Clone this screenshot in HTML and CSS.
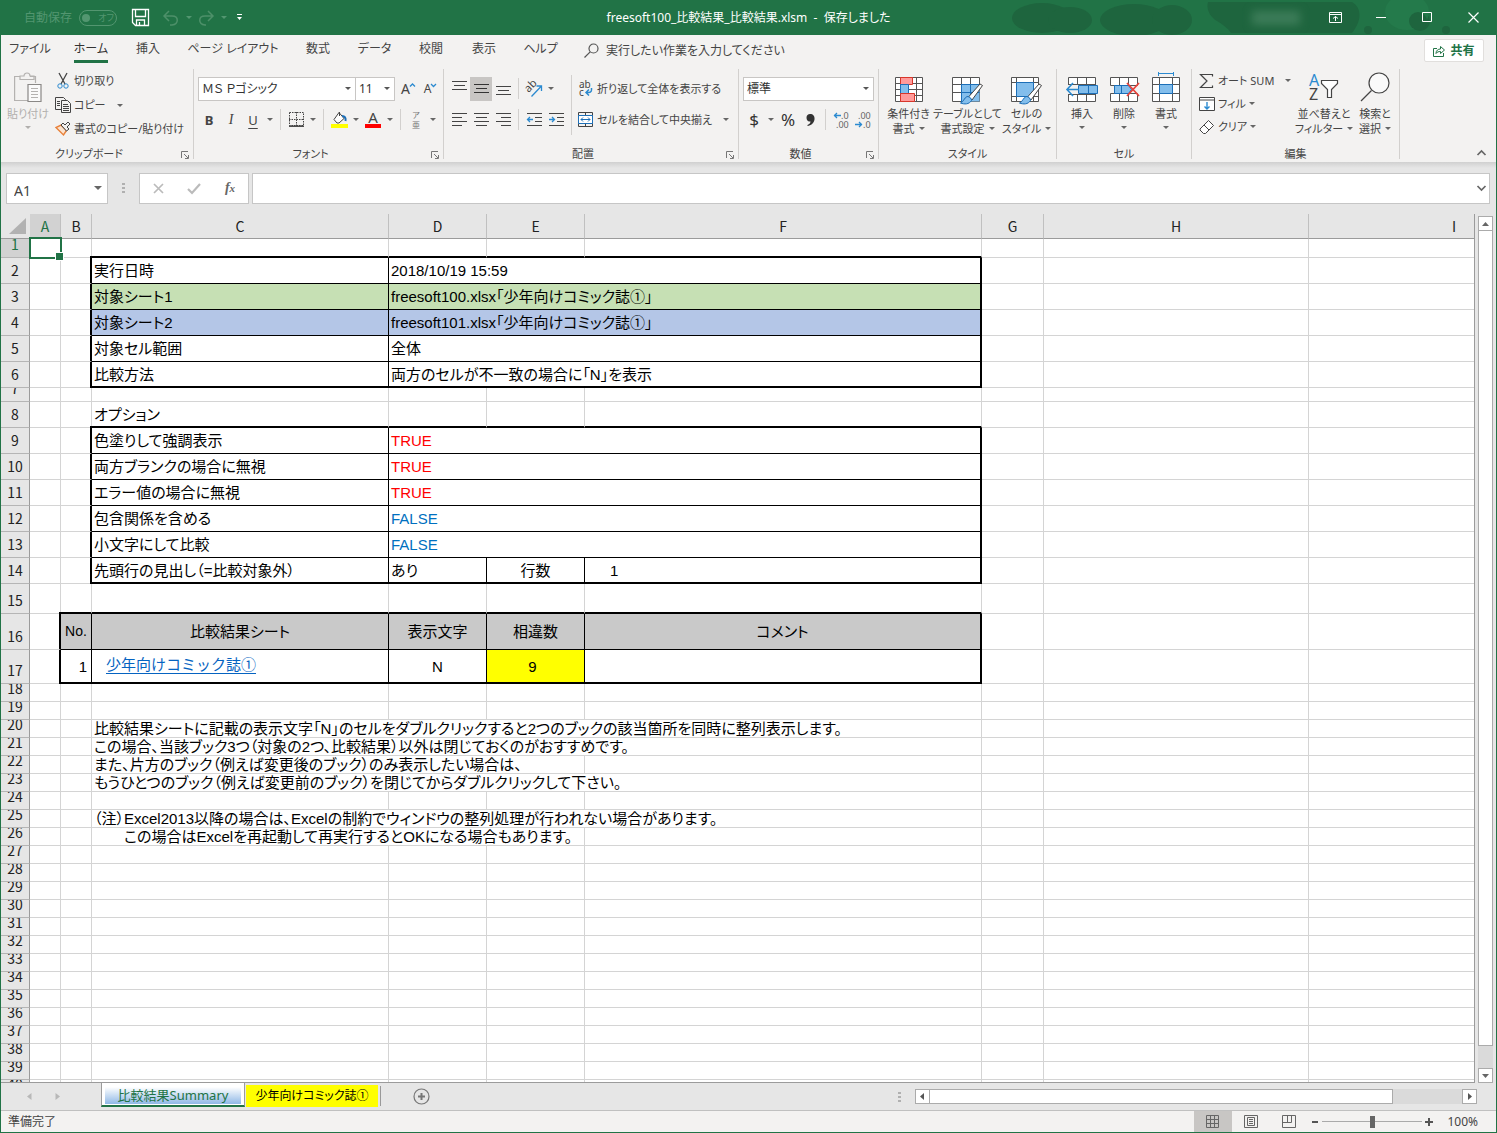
FILE: index.html
```html
<!DOCTYPE html>
<html lang="ja">
<head>
<meta charset="utf-8">
<title>freesoft100_比較結果_比較結果.xlsm</title>
<link rel="stylesheet" href="styles.css">
</head>
<body>
<div class="app">
  <header class="titlebar">
    <svg class="titlebar-art" width="510" height="35" viewBox="0 0 510 35" aria-hidden="true">
      <g fill="#1e653e">
        <ellipse cx="56" cy="18" rx="30" ry="15"/><ellipse cx="84" cy="20" rx="22" ry="13"/>
        <ellipse cx="148" cy="20" rx="34" ry="16"/><ellipse cx="186" cy="20" rx="20" ry="15"/>
        <path d="M222 2h144c10 6 10 18 0 31H245c-3-5-8-8-14-12-7-4-11-12-9-19z"/>
        <circle cx="382" cy="30" r="4"/><circle cx="434" cy="21" r="10"/><circle cx="460" cy="30" r="4"/>
      </g>
      <ellipse cx="421" cy="12" rx="22" ry="18" fill="#247a4b"/>
      <circle cx="432" cy="21" r="9" fill="#1e653e"/>
    </svg>
    <div class="quick">
      <span class="autosave">自動保存</span>
      <button class="toggle" aria-label="自動保存"><i></i><span>オフ</span></button>
      <button class="q-save" aria-label="保存"><svg width="17" height="17" fill="none" stroke="#fff"><path d="M.5.5h16v16h-13l-3-3zM3.500 1v6.500h10V1M4.500 16v-5h8v5M7.500 13v3" stroke-width="1.300"/></svg></button>
      <button class="q-btn" aria-label="元に戻す"><svg width="16" height="16" fill="none" stroke="#4d9069" stroke-width="1.500"><path d="M6 1 1 6l5 5M1 6h8c7 0 7 8 0 9H7"/></svg><i class="caret"></i></button>
      <button class="q-btn" aria-label="やり直し"><svg width="16" height="16" fill="none" stroke="#4d9069" stroke-width="1.500"><path d="m10 1 5 5-5 5M15 6H7c-7 0-7 8 0 9h1"/></svg><i class="caret"></i></button>
      <button class="q-more" aria-label="カスタマイズ"><svg width="7" height="7"><path d="M1 0h5v1H1zM1 3h5L3.500 6z" fill="#fff"/></svg></button>
    </div>
    <h1 class="doc-title">freesoft100_比較結果_比較結果.xlsm&nbsp; -&nbsp; 保存しました</h1>
    <div class="window-btns">
      <span class="account"></span>
      <button aria-label="リボンの表示オプション"><svg width="13" height="11" fill="none" stroke="#fff"><path d="M.5.5h12v10H.5zM1 2.500h11M6.500 9V4.500M4 6.500l2.500-2 2.500 2"/></svg></button>
      <button aria-label="最小化"><svg width="11" height="11" stroke="#fff"><path d="M0 5.500h10"/></svg></button>
      <button aria-label="最大化"><svg width="11" height="11" fill="none" stroke="#fff"><path d="M.5.5h9v9h-9z"/></svg></button>
      <button aria-label="閉じる"><svg width="11" height="11" stroke="#fff" stroke-width="1.200"><path d="m.5.5 10 10M10.500.5l-10 10"/></svg></button>
    </div>
  </header>

  <nav class="tabs">
    <button class="tab t-file">ファイル</button>
    <button class="tab t-home on">ホーム</button>
    <button class="tab t-two">挿入</button>
    <button class="tab t-page">ページ レイアウト</button>
    <button class="tab t-two">数式</button>
    <button class="tab t-data">データ</button>
    <button class="tab t-two">校閲</button>
    <button class="tab t-two">表示</button>
    <button class="tab t-data">ヘルプ</button>
    <button class="tell"><svg width="15" height="15" fill="none" stroke="#555" stroke-width="1.200"><circle cx="9.500" cy="5.500" r="4.500"/><path d="M6.200 8.800.5 14.500"/></svg>実行したい作業を入力してください</button>
    <button class="share"><svg width="12" height="12" fill="none" stroke="#217346"><path d="M4 3.500H.5v8h10V8M3 8.500c0-3 2-4.500 4.500-4.500V1.500l4 3.500-4 3.500V6.500C5.500 6.500 4 7 3 8.500z"/></svg>共有</button>
  </nav>

  <section class="ribbon">
    <div class="group g-clip">
      <div class="tools">
        <button class="big paste"><svg width="28" height="31" fill="none" stroke="#b4b2b0" stroke-width="1.200"><path d="M6 4.500H.600v24H14M16 4.500h5.500V11M6 7.500V4h4c0-4 6-4 6 0h4v3.500z" fill="#f3f2f1"/><path d="M14 12.500h13v17H14z" fill="#fafafa" stroke="#8a8886"/><path d="M17 16.500h7M17 19.500h7M17 22.500h7M17 25.500h7"/></svg><span>貼り付け</span><i class="caret"></i></button>
        <div class="stack">
          <button class="small"><svg width="16" height="16" fill="none"><path d="m4 0 6 11M12 0 6 11" stroke="#444" stroke-width="1.300"/><circle cx="5" cy="13" r="2.200" stroke="#2b8ad0"/><circle cx="11" cy="13" r="2.200" stroke="#2b8ad0"/></svg>切り取り</button>
          <button class="small"><svg width="16" height="16" fill="#f3f2f1" stroke="#444"><path d="M.5.5h8l2 2v10H.5z"/><path d="M2 4.500h3M2 6.500h3M2 8.500h3"/><path d="M6.500 3.500h6l3 3v9h-9z"/><path d="M8 7.500h5M8 9.500h6M8 11.500h6M8 13.500h6"/></svg>コピー<i class="caret gap"></i></button>
          <button class="small"><svg width="16" height="16"><path d="M1 6.500 8.500 14l3-4.500L6 4z" fill="#fbe3cf" stroke="#e8813a" stroke-width="1.400"/><path d="m6 4 2-2 2 2 3-3 2 2-3 3 2 2-2.500 2z" fill="#f3f2f1" stroke="#444"/></svg>書式のコピー/貼り付け</button>
        </div>
      </div>
      <div class="caption">クリップボード</div><button class="launch" aria-label="クリップボードの詳細"><svg width="8" height="8" fill="none" stroke="#777"><path d="M.5 7V.5H7M3 3l4 4M7.500 4v3.500H4"/></svg></button>
    </div>

    <div class="group g-font">
      <div class="rows">
        <div class="line">
          <span class="combo c-font"><select aria-label="フォント"><option>ＭＳ Ｐゴシック</option></select></span>
          <span class="combo c-size"><select aria-label="フォント サイズ"><option>11</option></select></span>
          <button class="ico" aria-label="拡大"><span class="letter">A</span><svg width="5" height="12" fill="none" stroke="#2b8ad0" stroke-width="1.300"><path d="m0 3.500 2.500-2.500L5 3.500"/></svg></button>
          <button class="ico" aria-label="縮小"><span class="letter sm">A</span><svg width="5" height="12" fill="none" stroke="#2b8ad0" stroke-width="1.300"><path d="m0 1 2.500 2.500L5 1"/></svg></button>
        </div>
        <div class="line">
          <button class="ico bold">B</button><button class="ico ital">I</button><button class="ico under">U</button><button class="drop" aria-label="下線"><i class="caret"></i></button>
          <i class="sep"></i>
          <button class="ico" aria-label="罫線"><svg width="15" height="15" fill="none" stroke="#444"><path d="M.5.5h14v13H.5zM7.500 0v14M0 7.500h15" stroke-dasharray="1.500 1"/><path d="M0 14.200h15" stroke-width="1.500"/></svg></button><button class="drop" aria-label="罫線の種類"><i class="caret"></i></button>
          <i class="sep"></i>
          <button class="ico" aria-label="塗りつぶし"><svg width="17" height="17"><path d="m8 1.500 5 6-5 4.500H6L3 8.500z" fill="#fff" stroke="#444"/><path d="M8.500 1v4" stroke="#444"/><path d="M11 5c3 0 4 2 3.500 5" fill="none" stroke="#1c6fb8" stroke-width="2"/><path d="M0 13h17v4H0z" fill="#ff0"/></svg></button><button class="drop" aria-label="塗りつぶしの色"><i class="caret"></i></button>
          <button class="ico fcolor" aria-label="フォントの色"><span>A</span></button><button class="drop" aria-label="色の選択"><i class="caret"></i></button>
          <i class="sep"></i>
          <button class="ico ruby"><span>ア</span><span>亜</span></button><button class="drop" aria-label="ふりがな"><i class="caret"></i></button>
        </div>
      </div>
      <div class="caption">フォント</div><button class="launch" aria-label="フォントの詳細"><svg width="8" height="8" fill="none" stroke="#777"><path d="M.5 7V.5H7M3 3l4 4M7.500 4v3.500H4"/></svg></button>
    </div>

    <div class="group g-align">
      <div class="split">
        <div class="rows">
          <div class="line">
            <button class="ico" aria-label="上揃え"><svg width="15" height="15" stroke="#444"><path d="M0 .5h15M2 4.500h11M0 8.500h15"/></svg></button>
            <button class="ico on" aria-label="上下中央揃え"><svg width="15" height="15" stroke="#333"><path d="M0 3.500h15M2 7.500h11M0 11.500h15"/></svg></button>
            <button class="ico" aria-label="下揃え"><svg width="15" height="15" stroke="#444"><path d="M0 5.500h15M2 9.500h11M0 13.500h15"/></svg></button>
            <i class="sep"></i>
            <button class="ico" aria-label="方向"><svg width="17" height="17"><g transform="rotate(-45 6 8)"><text x="0" y="9" font-size="11" fill="#444">ab</text></g><path d="M5.500 16.500 15 6.500M10.500 6H15.500V11" fill="none" stroke="#2b8ad0" stroke-width="1.300"/></svg></button><button class="drop" aria-label="方向の選択"><i class="caret"></i></button>
          </div>
          <div class="line">
            <button class="ico" aria-label="左揃え"><svg width="15" height="15" stroke="#444"><path d="M0 1.500h15M0 5.500h10M0 9.500h15M0 13.500h10"/></svg></button>
            <button class="ico" aria-label="中央揃え"><svg width="15" height="15" stroke="#444"><path d="M0 1.500h15M2 5.500h11M0 9.500h15M2 13.500h11"/></svg></button>
            <button class="ico" aria-label="右揃え"><svg width="15" height="15" stroke="#444"><path d="M0 1.500h15M5 5.500h10M0 9.500h15M5 13.500h10"/></svg></button>
            <i class="sep"></i>
            <button class="ico" aria-label="インデントを減らす"><svg width="15" height="15" fill="none" stroke="#444"><path d="M0 1.500h15M8 5.500h7M8 9.500h7M0 13.500h15"/><path d="M.5 7.500H6M3 5 .5 7.500 3 10" stroke="#2b8ad0" stroke-width="1.300"/></svg></button>
            <button class="ico" aria-label="インデントを増やす"><svg width="15" height="15" fill="none" stroke="#444"><path d="M0 1.500h15M8 5.500h7M8 9.500h7M0 13.500h15"/><path d="M0 7.500h5.500M3 5l2.500 2.500L3 10" stroke="#2b8ad0" stroke-width="1.300"/></svg></button>
          </div>
        </div>
        <i class="sep tall"></i>
        <div class="rows">
          <div class="line"><button class="small"><svg class="wide" width="15" height="17"><text x="1" y="8" font-size="10" fill="#444">ab</text><text x="1" y="16" font-size="10" fill="#444">c</text><path d="M13.500 8v2c0 2.500-2 2.500-5.500 2.500M11 9.500 8 12.500l3 3" fill="none" stroke="#2b8ad0" stroke-width="1.500"/></svg>折り返して全体を表示する</button></div>
          <div class="line"><button class="small merge"><svg class="wide" width="15" height="15" fill="none" stroke="#444"><path d="M.5.5h14v14H.5zM7.500 0v3.500M7.500 11.500V15"/><path d="M.5 3.500h14v8H.5z" fill="#fff" stroke="#1c6fb8"/><path d="M3 7.500h9M5 5.500l-2 2 2 2M10 5.500l2 2-2 2" stroke="#1c6fb8"/></svg>セルを結合して中央揃え<i class="caret"></i></button></div>
        </div>
      </div>
      <div class="caption">配置</div><button class="launch" aria-label="配置の詳細"><svg width="8" height="8" fill="none" stroke="#777"><path d="M.5 7V.5H7M3 3l4 4M7.500 4v3.500H4"/></svg></button>
    </div>

    <div class="group g-num">
      <div class="rows">
        <div class="line"><span class="combo c-num"><select aria-label="数値の書式"><option>標準</option></select></span></div>
        <div class="line">
          <button class="ico sym">$</button><button class="drop" aria-label="通貨"><i class="caret"></i></button>
          <button class="ico sym">%</button>
          <button class="ico" aria-label="桁区切り"><svg width="9" height="14"><path d="M4 1c3 0 5 2 4.500 5.500C8 10 5 12.500 1.500 13V12c2-1 3-2 3-3.500C1.500 9 .5 6.500.5 4.500.5 2.500 2 1 4 1z" fill="#333"/></svg></button>
          <i class="sep"></i>
          <button class="ico" aria-label="小数点以下を増やす"><svg width="16" height="18" fill="#666"><path d="M1 4.500h7M4 2 1.500 4.500 4 7" fill="none" stroke="#2b8ad0" stroke-width="1.300"/><text x="8" y="8" font-size="9">.0</text><text x="3" y="17" font-size="9">.00</text></svg></button>
          <button class="ico" aria-label="小数点以下を減らす"><svg width="16" height="18" fill="#666"><text x="3" y="8" font-size="9">.00</text><text x="8" y="17" font-size="9">.0</text><path d="M0 13.500h7M4 11l2.500 2.500L4 16" fill="none" stroke="#2b8ad0" stroke-width="1.300"/></svg></button>
        </div>
      </div>
      <div class="caption">数値</div><button class="launch" aria-label="数値の詳細"><svg width="8" height="8" fill="none" stroke="#777"><path d="M.5 7V.5H7M3 3l4 4M7.500 4v3.500H4"/></svg></button>
    </div>

    <div class="group g-style">
      <div class="tools even">
        <button class="big"><svg width="30" height="31"><path d="M1.500 5.500h27v24h-27zM1.500 11.500h27M1.500 17.500h27M1.500 23.500h27M6.500 5v25M22.500 5v25" fill="#fff" stroke="#555"/><path d="M6.500 5.500h12v7h-12z" fill="#ff9a9a" stroke="#d8362a"/><path d="M6.500 12.500h8v9h-8z" fill="#83beec" stroke="#1c6fb8"/><path d="M6.500 21.500h14v8h-14z" fill="#ff9a9a" stroke="#d8362a"/></svg><span>条件付き<br>書式<i class="caret"></i></span></button>
        <button class="big"><svg width="32" height="33"><path d="M.5 5.500h27v24H.5zM.5 12.500h27M.5 20.500h27M9.500 5v25M18.500 5v25" fill="#fff" stroke="#555"/><path d="M9.500 12.500h18v17h-18z" fill="#83beec"/><path d="M9.500 12.500h18M9.500 20.500h18M9.500 12v18M18.500 12v18" stroke="#1c6fb8"/><path d="m28 12 2.500 1.500L20 28l-3.500-3z" fill="#fff" stroke="#444"/><path d="M15 24.500c3 0 4.500 2 4.500 4-2.500 4-7 4-11 2.500 3-1 3.500-5 6.500-6.500z" fill="#83beec" stroke="#1c6fb8"/></svg><span>テーブルとして<br>書式設定<i class="caret"></i></span></button>
        <button class="big"><svg width="32" height="33"><path d="M.5 5.500h27v24H.5zM.5 10.500h27M.5 24.500h27M5.500 5v25M22.500 5v25" fill="#fff" stroke="#555"/><path d="M5.500 10.500h17v14h-17z" fill="#83beec" stroke="#1c6fb8"/><path d="m28 12 2.500 1.500L20 28l-3.500-3z" fill="#fff" stroke="#444"/><path d="M15 24.500c3 0 4.500 2 4.500 4-2.500 4-7 4-11 2.500 3-1 3.500-5 6.500-6.500z" fill="#83beec" stroke="#1c6fb8"/></svg><span>セルの<br>スタイル<i class="caret"></i></span></button>
      </div>
      <div class="caption">スタイル</div>
    </div>

    <div class="group g-cells">
      <div class="tools even">
        <button class="big"><svg width="32" height="31"><path d="M2.500 5.500h27v24h-27zM2.500 22.500h27M11.500 5v25M20.500 5v25M2.500 12.500h27" fill="#fff" stroke="#555"/><path d="M12.500 13.500h19v8h-19zM22.500 13v9" fill="#83beec" stroke="#1c6fb8"/><path d="M0 13h12v9H0z" fill="#f3f2f1"/><path d="M1 17.500h12M7 11l-6 6.500L7 24" fill="none" stroke="#2b8ad0" stroke-width="1.600"/></svg><span>挿入</span><i class="caret"></i></button>
        <button class="big"><svg width="32" height="31"><path d="M2.500 5.500h27v8h-27zM2.500 21.500h27v8h-27zM11.500 5v8M20.500 5v8M11.500 22v8M20.500 22v8" fill="#fff" stroke="#555"/><path d="M6.500 13.500h14l3 4-3 4h-14zM13.500 13v9" fill="#83beec" stroke="#1c6fb8"/><path d="m19 11 12 13M31 11 19 24" stroke="#e8423a" stroke-width="1.800"/></svg><span>削除</span><i class="caret"></i></button>
        <button class="big"><svg width="30" height="31"><path d="M1.500 5.500h27v24h-27zM1.500 12.500h27M1.500 21.500h27M8.500 5v25M21.500 5v25" fill="#fff" stroke="#555"/><path d="M8.500 12.500h13v9h-13z" fill="#83beec" stroke="#1c6fb8"/><path d="M7.500 1.500h15M7.500 0v4M22.500 0v4" stroke="#2b8ad0"/></svg><span>書式</span><i class="caret"></i></button>
      </div>
      <div class="caption">セル</div>
    </div>

    <div class="group g-edit">
      <div class="tools">
        <div class="stack">
          <button class="small"><svg width="16" height="16" fill="none" stroke="#444" stroke-width="1.200"><path d="M13.500 3.500v-2h-12L8 8l-6.500 6.500h12v-2"/></svg>オート SUM<i class="caret gap"></i></button>
          <button class="small"><svg width="16" height="16" fill="none" stroke="#444"><path d="M.5 1.500h15v13H.5z" fill="#fff"/><path d="M0 4h15"/><path d="M8 6v7M5.500 10.500 8 13l2.500-2.500" stroke="#2b8ad0" stroke-width="1.400"/></svg>フィル<i class="caret"></i></button>
          <button class="small"><svg width="16" height="16" fill="#fff" stroke="#444"><path d="m9.500 1.500 5 5-8 8h-2l-3.500-3.500v-1zM5 6l5 5"/></svg>クリア<i class="caret"></i></button>
        </div>
        <button class="big sort"><svg width="30" height="31"><text x="0" y="14" font-size="16" fill="#2b8ad0">A</text><text x="0" y="28" font-size="16" fill="#444">Z</text><path d="M12.500 8.500h16v3l-6 6v8h-4v-8l-6-6z" fill="#fff" stroke="#444" stroke-width="1.200"/></svg><span>並べ替えと<br>フィルター<i class="caret"></i></span></button>
        <button class="big find"><svg width="30" height="31" fill="#fafafa" stroke="#444" stroke-width="1.200"><circle cx="19" cy="11" r="10"/><path d="M11.500 18.500 1 29"/></svg><span>検索と<br>選択<i class="caret"></i></span></button>
      </div>
      <div class="caption">編集</div>
    </div>
    <button class="collapse" aria-label="リボンを折りたたむ"><svg width="9" height="6" fill="none" stroke="#666" stroke-width="1.700"><path d="m.5 5 4-4 4 4"/></svg></button>
  </section>

  <section class="formula">
    <span class="namebox"><input aria-label="名前ボックス" value="A1"></span>
    <i class="dots"></i>
    <div class="fx">
      <button aria-label="キャンセル"><svg width="11" height="11" stroke="#bbb" stroke-width="1.700"><path d="m1 1 9 9M10 1l-9 9"/></svg></button>
      <button aria-label="入力"><svg width="14" height="11" fill="none" stroke="#bbb" stroke-width="2.200"><path d="m1 6 4 4 8-9"/></svg></button>
      <button class="fx-btn" aria-label="関数の挿入">f<sub>x</sub></button>
    </div>
    <div class="entry"><input aria-label="数式バー"><svg width="9" height="6" fill="none" stroke="#666" stroke-width="1.700"><path d="m.5 1 4 4 4-4"/></svg></div>
  </section>

  <main class="work">
    <div class="sheet">
      <table class="grid">
        <colgroup><col class="w-n"><col class="w-a"><col class="w-b"><col class="w-c"><col class="w-d"><col class="w-d"><col class="w-f"><col class="w-g"><col class="w-h"><col class="w-i"></colgroup>
        <thead><tr><th class="corner"><svg width="18" height="17"><path d="M17 0v16H0z" fill="#b2b2b2"/></svg></th><th scope="col" class="sel">A</th><th scope="col">B</th><th scope="col">C</th><th scope="col">D</th><th scope="col">E</th><th scope="col">F</th><th scope="col">G</th><th scope="col">H</th><th scope="col">I</th></tr></thead>
        <tbody>
        <tr class="r1"><th scope="row" class="sel"><span>1</span></th><td class="active"></td><td class="joint"></td><td class="kb"></td><td class="kb"></td><td class="kb"></td><td class="kb"></td><td></td><td></td><td></td></tr>
        <tr class="r26"><th scope="row"><span>2</span></th><td></td><td class="kr"></td><td class="br bb">実行日時</td><td class="kr bb" colspan="3">2018/10/19 15:59</td><td></td><td></td><td></td></tr>
        <tr class="r26"><th scope="row"><span>3</span></th><td></td><td class="kr"></td><td class="br bb green">対象シート1</td><td class="kr bb green" colspan="3">freesoft100.xlsx「少年向けコミック誌①」</td><td></td><td></td><td></td></tr>
        <tr class="r26"><th scope="row"><span>4</span></th><td></td><td class="kr"></td><td class="br bb blue">対象シート2</td><td class="kr bb blue" colspan="3">freesoft101.xlsx「少年向けコミック誌①」</td><td></td><td></td><td></td></tr>
        <tr class="r26"><th scope="row"><span>5</span></th><td></td><td class="kr"></td><td class="br bb">対象セル範囲</td><td class="kr bb" colspan="3">全体</td><td></td><td></td><td></td></tr>
        <tr class="r26"><th scope="row"><span>6</span></th><td></td><td class="kr joint"></td><td class="br kb">比較方法</td><td class="kr kb" colspan="3">両方のセルが不一致の場合に「N」を表示</td><td></td><td></td><td></td></tr>
        <tr class="r14"><th scope="row"><span>7</span></th><td></td><td></td><td></td><td></td><td></td><td></td><td></td><td></td><td></td></tr>
        <tr class="r26"><th scope="row"><span>8</span></th><td></td><td class="joint"></td><td class="kb">オプション</td><td class="kb"></td><td class="kb"></td><td class="kb"></td><td></td><td></td><td></td></tr>
        <tr class="r26"><th scope="row"><span>9</span></th><td></td><td class="kr"></td><td class="br bb">色塗りして強調表示</td><td class="kr bb yes" colspan="3">TRUE</td><td></td><td></td><td></td></tr>
        <tr class="r26"><th scope="row"><span>10</span></th><td></td><td class="kr"></td><td class="br bb">両方ブランクの場合に無視</td><td class="kr bb yes" colspan="3">TRUE</td><td></td><td></td><td></td></tr>
        <tr class="r26"><th scope="row"><span>11</span></th><td></td><td class="kr"></td><td class="br bb">エラー値の場合に無視</td><td class="kr bb yes" colspan="3">TRUE</td><td></td><td></td><td></td></tr>
        <tr class="r26"><th scope="row"><span>12</span></th><td></td><td class="kr"></td><td class="br bb">包含関係を含める</td><td class="kr bb no" colspan="3">FALSE</td><td></td><td></td><td></td></tr>
        <tr class="r26"><th scope="row"><span>13</span></th><td></td><td class="kr"></td><td class="br bb">小文字にして比較</td><td class="kr bb no" colspan="3">FALSE</td><td></td><td></td><td></td></tr>
        <tr class="r26"><th scope="row"><span>14</span></th><td></td><td class="kr joint"></td><td class="br kb">先頭行の見出し（=比較対象外）</td><td class="br kb">あり</td><td class="br kb mid">行数</td><td class="kr kb indent">1</td><td></td><td></td><td></td></tr>
        <tr class="r30"><th scope="row"><span>15</span></th><td class="joint"></td><td class="kb"></td><td class="kb"></td><td class="kb"></td><td class="kb"></td><td class="kb"></td><td></td><td></td><td></td></tr>
        <tr class="r36"><th scope="row"><span>16</span></th><td class="kr"></td><td class="br bb mid gray tight">No.</td><td class="br bb mid gray">比較結果シート</td><td class="br bb mid gray">表示文字</td><td class="br bb mid gray">相違数</td><td class="kr bb mid gray">コメント</td><td></td><td></td><td></td></tr>
        <tr class="r34"><th scope="row"><span>17</span></th><td class="kr joint"></td><td class="br kb end">1</td><td class="br kb"><a class="link" href="#sheet2">少年向けコミック誌①</a></td><td class="br kb mid">N</td><td class="br kb mid count">9</td><td class="kr kb"></td><td></td><td></td><td></td></tr>
        <tr class="r18"><th scope="row"><span>18</span></th><td></td><td></td><td></td><td></td><td></td><td></td><td></td><td></td><td></td></tr>
        <tr class="r18"><th scope="row"><span>19</span></th><td></td><td></td><td></td><td></td><td></td><td></td><td></td><td></td><td></td></tr>
        <tr class="r18"><th scope="row"><span>20</span></th><td></td><td></td><td colspan="4">比較結果シートに記載の表示文字「N」のセルをダブルクリックすると2つのブックの該当箇所を同時に整列表示します。</td><td></td><td></td><td></td></tr>
        <tr class="r18"><th scope="row"><span>21</span></th><td></td><td></td><td colspan="4">この場合、当該ブック3つ（対象の2つ、比較結果）以外は閉じておくのがおすすめです。</td><td></td><td></td><td></td></tr>
        <tr class="r18"><th scope="row"><span>22</span></th><td></td><td></td><td colspan="3">また、片方のブック（例えば変更後のブック）のみ表示したい場合は、</td><td></td><td></td><td></td><td></td></tr>
        <tr class="r18"><th scope="row"><span>23</span></th><td></td><td></td><td colspan="4">もうひとつのブック（例えば変更前のブック）を閉じてからダブルクリックして下さい。</td><td></td><td></td><td></td></tr>
        <tr class="r18"><th scope="row"><span>24</span></th><td></td><td></td><td></td><td></td><td></td><td></td><td></td><td></td><td></td></tr>
        <tr class="r18"><th scope="row"><span>25</span></th><td></td><td></td><td colspan="4">（注）Excel2013以降の場合は、Excelの制約でウィンドウの整列処理が行われない場合があります。</td><td></td><td></td><td></td></tr>
        <tr class="r18"><th scope="row"><span>26</span></th><td></td><td></td><td colspan="3">　　この場合はExcelを再起動して再実行するとOKになる場合もあります。</td><td></td><td></td><td></td><td></td></tr>
        <tr class="r18"><th scope="row"><span>27</span></th><td></td><td></td><td></td><td></td><td></td><td></td><td></td><td></td><td></td></tr>
        <tr class="r18"><th scope="row"><span>28</span></th><td></td><td></td><td></td><td></td><td></td><td></td><td></td><td></td><td></td></tr>
        <tr class="r18"><th scope="row"><span>29</span></th><td></td><td></td><td></td><td></td><td></td><td></td><td></td><td></td><td></td></tr>
        <tr class="r18"><th scope="row"><span>30</span></th><td></td><td></td><td></td><td></td><td></td><td></td><td></td><td></td><td></td></tr>
        <tr class="r18"><th scope="row"><span>31</span></th><td></td><td></td><td></td><td></td><td></td><td></td><td></td><td></td><td></td></tr>
        <tr class="r18"><th scope="row"><span>32</span></th><td></td><td></td><td></td><td></td><td></td><td></td><td></td><td></td><td></td></tr>
        <tr class="r18"><th scope="row"><span>33</span></th><td></td><td></td><td></td><td></td><td></td><td></td><td></td><td></td><td></td></tr>
        <tr class="r18"><th scope="row"><span>34</span></th><td></td><td></td><td></td><td></td><td></td><td></td><td></td><td></td><td></td></tr>
        <tr class="r18"><th scope="row"><span>35</span></th><td></td><td></td><td></td><td></td><td></td><td></td><td></td><td></td><td></td></tr>
        <tr class="r18"><th scope="row"><span>36</span></th><td></td><td></td><td></td><td></td><td></td><td></td><td></td><td></td><td></td></tr>
        <tr class="r18"><th scope="row"><span>37</span></th><td></td><td></td><td></td><td></td><td></td><td></td><td></td><td></td><td></td></tr>
        <tr class="r18"><th scope="row"><span>38</span></th><td></td><td></td><td></td><td></td><td></td><td></td><td></td><td></td><td></td></tr>
        <tr class="r18"><th scope="row"><span>39</span></th><td></td><td></td><td></td><td></td><td></td><td></td><td></td><td></td><td></td></tr>
        <tr class="r18"><th scope="row"><span>40</span></th><td></td><td></td><td></td><td></td><td></td><td></td><td></td><td></td><td></td></tr>
        </tbody>
      </table>
    </div>
    <div class="vscroll">
      <button aria-label="上へ"><svg width="7" height="4"><path d="M0 4h7L3.500 0z" fill="#666"/></svg></button>
      <div class="vthumb"></div><div class="vtrack"></div>
      <button aria-label="下へ"><svg width="7" height="4"><path d="M0 0h7L3.500 4z" fill="#666"/></svg></button>
    </div>
  </main>

  <div class="sheetbar">
    <div class="navs">
      <button aria-label="前のシート"><svg width="5" height="7"><path d="M4.500 0v7L0 3.500z" fill="#b8b8b8"/></svg></button>
      <button aria-label="次のシート"><svg width="5" height="7"><path d="M.5 0v7L5 3.500z" fill="#b8b8b8"/></svg></button>
    </div>
    <button class="stab current"><span>比較結果Summary</span></button>
    <button class="stab yellow" id="sheet2">少年向けコミック誌①</button>
    <i class="tabsep"></i>
    <button class="add" aria-label="新しいシート"><svg width="17" height="17" fill="none" stroke="#777"><circle cx="8.500" cy="8.500" r="7.500" stroke-width="1.200"/><path d="M8.500 5v7M5 8.500h7" stroke-width="2"/></svg></button>
    <i class="dots"></i>
    <div class="hscroll">
      <button aria-label="左へ"><svg width="4" height="7"><path d="M4 0v7L0 3.500z" fill="#555"/></svg></button>
      <div class="hthumb"></div><div class="htrack"></div>
      <button aria-label="右へ"><svg width="4" height="7"><path d="M0 0v7l4-3.500z" fill="#555"/></svg></button>
    </div>
  </div>

  <footer class="status">
    <span class="ready">準備完了</span>
    <button class="view on" aria-label="標準"><svg width="14" height="14" fill="none" stroke="#666"><path d="M.5.5h12v12H.5zM.5 4.500h12M.5 8.500h12M4.500.5v12M8.500.5v12"/></svg></button>
    <button class="view" aria-label="ページ レイアウト"><svg width="14" height="14" fill="none" stroke="#666"><path d="M.5.5h13v12H.5zM3.500 2.500h7v8h-7zM5 4.500h4M5 6.500h4M5 8.500h4"/></svg></button>
    <button class="view" aria-label="改ページ プレビュー"><svg width="14" height="14" fill="none" stroke="#666"><path d="M.5.5h13v12H.5zM.5 7.500h9V.5M5.500.5v7"/></svg></button>
    <button class="zoom" aria-label="縮小"><svg width="7" height="7"><path d="M0 3h6v2H0z" fill="#555"/></svg></button>
    <input class="slider" type="range" min="0" max="100" value="50" aria-label="ズーム">
    <button class="zoom" aria-label="拡大"><svg width="8" height="8"><path d="M0 3h8v2H0zM3 0h2v8H3z" fill="#555"/></svg></button>
    <span class="pct">100%</span>
  </footer>
</div>
</body>
</html>
```
FILE: styles.css
```css
* { box-sizing: border-box; }
body {
  margin: 0;
  font: 12px/16px "Noto Sans", "Noto Sans CJK JP", sans-serif;
  font-feature-settings: "palt";
  color: #444;
}
button, input, select { font: inherit; font-feature-settings: inherit; color: inherit; background: none; border: 0; padding: 0; margin: 0; }
button { display: flex; align-items: center; justify-content: center; white-space: nowrap; }
svg { display: block; flex: none; overflow: visible; }
svg text { font-family: "Noto Sans", sans-serif; }

.app {
  display: flex;
  flex-direction: column;
  height: 100vh;
  overflow: hidden;
  background: #e6e6e6;
  border: 1px solid #217346;
  border-top: 0;
}

/* caret */
.caret {
  display: inline-block;
  flex: none;
  border: 3px solid transparent;
  border-top-color: #666;
  border-bottom: 0;
}

/* title bar */
.titlebar {
  position: relative;
  display: grid;
  grid-template-columns: 1fr auto 1fr;
  align-items: center;
  flex: none;
  height: 35px;
  background: #217346;
  color: #fff;
}
.titlebar-art { position: absolute; right: 0; top: 0; overflow: hidden; }
.quick { display: flex; align-items: center; padding-left: 23px; }
.autosave { width: 55px; color: #539670; }
.toggle { width: 38px; height: 16px; border: 1px solid #539670; border-radius: 8px; color: #539670; font-size: 9px; gap: 8px; line-height: 14px; }
.toggle i { width: 8px; height: 8px; border-radius: 50%; background: #539670; }
.q-save { margin: 0 14px 0 15px; }
.q-btn { gap: 7px; width: 35px; justify-content: flex-start; }
.q-btn .caret { border-top-color: #539670; }
.q-more { margin-left: 3px; }
.doc-title { margin: 0; font-size: 12px; font-weight: 400; line-height: 16px; }
.window-btns { position: relative; display: flex; justify-content: flex-end; align-items: center; }
.window-btns button { width: 46px; height: 34px; }
.account { width: 48px; height: 14px; margin-right: 12px; background: #3c7c58; filter: blur(4px); }

/* tabs */
.tabs { display: flex; flex: none; height: 31px; background: #f3f2f1; }
.tab { height: 28px; border-bottom: 3px solid transparent; padding-top: 3px; margin-right: 27px; }
.t-file { margin-left: 10px; width: 38px; margin-right: 25px; }
.t-home { width: 34px; }
.t-two { width: 26px; }
.t-page { width: 90px; }
.t-data { width: 33px; }
.tab.on { border-bottom-color: #217346; color: #333; }
.tell { gap: 7px; height: 31px; }
.share { margin: 4px 12px 3px auto; width: 60px; height: 23px; gap: 5px; background: #fff; border: 1px solid #e1dfdd; border-radius: 2px; color: #217346; font-weight: 700; }

/* ribbon */
.ribbon { display: flex; flex: none; height: 96px; padding: 3px 0; background: #f3f2f1; font-size: 11px; }
.group { position: relative; display: flex; flex-direction: column; justify-content: space-between; flex: none; height: 90px; border-right: 1px solid #d2d0ce; }
.g-clip { width: 193px; }
.g-font { width: 250px; }
.g-align { width: 295px; }
.g-num { width: 140px; }
.g-style { width: 178px; }
.g-cells { width: 135px; }
.g-edit { width: 208px; }
.caption { height: 14px; line-height: 17px; text-align: center; padding-right: 16px; }
.g-style .caption, .g-cells .caption, .g-edit .caption { padding-right: 0; }
.launch { position: absolute; right: 4px; bottom: 0; }
.tools { display: flex; }
.even .big { flex: 1 1 0; min-width: 0; }
.g-cells .even { padding: 0 4px; }
.big { flex-direction: column; justify-content: flex-start; line-height: 15px; padding-top: 3px; }
.big svg { height: 31px; }
.big span { text-align: center; margin-top: 3px; }
.big > .caret { margin-top: 5px; }
.big span .caret { margin-left: 4px; vertical-align: 3px; }
.paste { width: 54px; color: #b1afad; }
.paste .caret { border-top-color: #b1afad; }
.stack { display: flex; flex-direction: column; }
.small { height: 24px; gap: 3px; justify-content: flex-start; }
.small .gap { margin-left: 8px; }
.g-edit .stack { width: 102px; padding-left: 7px; }
.g-edit .small { height: 23px; }
.sort { width: 60px; }
.find { width: 42px; }
.rows { padding-top: 4px; }
.line { display: flex; align-items: center; height: 31px; }
.g-font .rows, .g-num .rows, .g-align .split > .rows:first-child { padding-left: 4px; }
.combo { position: relative; display: flex; height: 24px; border: 1px solid #c8c6c4; background: #fff; font-size: 12px; }
.combo select { flex: 1; min-width: 0; appearance: none; padding: 0 3px; color: #333; }
.combo::after, .namebox::after { content: ""; position: absolute; right: 4px; top: 9px; border: 3px solid transparent; border-top-color: #555; border-bottom: 0; pointer-events: none; }
.c-font { width: 158px; }
.c-size { width: 40px; margin: 0 2px 0 -1px; }
.c-num { width: 131px; }
.ico { width: 22px; height: 24px; }
.ico.on { background: #c8c6c4; }
.drop { width: 12px; height: 24px; }
.sep { flex: none; width: 1px; height: 21px; margin: 0 4px; background: #d2d0ce; }
.sep.tall { height: 60px; margin: 6px 6px 0 4px; }
.letter { font-size: 14px; }
.letter.sm { font-size: 12px; }
.bold { font-weight: 700; font-size: 13px; }
.ital { font: italic 14px "Liberation Serif", serif; }
.under { text-decoration: underline; font-size: 13px; text-underline-offset: 3px; }
.fcolor span { width: 16px; height: 17px; border-bottom: 4px solid #f00; font-size: 15px; line-height: 13px; text-align: center; }
.ruby { flex-direction: column; font-size: 8px; line-height: 10px; color: #777; }
.split { display: flex; align-items: flex-start; }
.wide { margin-right: 1px; }
.merge .caret { margin-left: 8px; }
.sym { font-size: 17px; color: #333; }
.collapse { margin: auto 10px 0 auto; height: 12px; }

/* formula bar */
.formula { display: flex; flex: none; align-items: center; height: 52px; padding: 0 6px 0 5px; background: linear-gradient(#d0d0d0, #e6e6e6 6px); }
.namebox { position: relative; width: 102px; height: 31px; border: 1px solid #c6c6c6; background: #fff; }
.namebox input { width: 80px; height: 29px; padding: 4px 7px 0; font-size: 14px; }
.namebox::after { right: 5px; top: 12px; border-width: 4px 4px 0; border-top-color: #666; }
.dots { width: 3px; height: 11px; margin: 0 14px; background: repeating-linear-gradient(#b0b0b0 0 2px, transparent 2px 4px); }
.fx { display: flex; width: 110px; height: 31px; border: 1px solid #c6c6c6; background: #fff; }
.fx button { flex: 1; }
.fx .fx-btn { font: italic bold 14px "Liberation Serif", serif; color: #666; }
.fx-btn sub { font-size: 11px; line-height: 8px; vertical-align: 0; }
.entry { display: flex; align-items: center; flex: 1; height: 31px; margin-left: 3px; padding-right: 3px; border: 1px solid #c6c6c6; background: #fff; }
.entry input { flex: 1; height: 29px; padding: 0 6px; }

/* worksheet */
.work { display: flex; flex: 1; min-height: 0; }
.sheet { flex: 1; min-width: 0; overflow: hidden; border-right: 1px solid #9b9b9b; border-bottom: 1px solid #9b9b9b; }
.grid {
  table-layout: fixed;
  width: 1599px;
  border-collapse: separate;
  border-spacing: 0;
  font: 15px/17px "Liberation Sans", "Noto Sans CJK JP", sans-serif;
  font-feature-settings: "palt";
  color: #000;
}
.w-n { width: 29px; }
.w-a, .w-b { width: 31px; }
.w-c { width: 297px; }
.w-d { width: 98px; }
.w-f { width: 397px; }
.w-g { width: 62px; }
.w-h { width: 265px; }
.w-i { width: 291px; }
.grid th { padding: 0; background: #e6e6e6; font-family: "Noto Sans CJK JP", sans-serif; font-size: 14px; font-weight: 400; color: #222; }
.grid thead th { height: 25px; border-bottom: 1px solid #9b9b9b; border-right: 1px solid #c0c0c0; }
.grid thead .corner { border-right-color: #e6e6e6; vertical-align: bottom; }
.corner svg { margin: 0 0 3px 8px; }
.grid tbody th { border-right: 1px solid #9b9b9b; border-bottom: 1px solid #b5b5b5; vertical-align: bottom; }
.grid tbody th span { display: flex; justify-content: center; align-items: flex-end; height: calc(var(--h) - 1px); overflow: hidden; line-height: 26px; }
.grid .sel { background: #d2d2d2; color: #217346; }
.grid td { height: var(--h); padding: 0 2px; border: solid #d4d4d4; border-width: 0 1px 1px 0; background: #fff; white-space: nowrap; vertical-align: middle; }
.r1 { --h: 19px; }
.r14 { --h: 14px; }
.r18 { --h: 18px; }
.r26 { --h: 26px; }
.r30 { --h: 30px; }
.r34 { --h: 34px; }
.r36 { --h: 36px; }
.grid .r14 td, .grid .r1 td { line-height: 0; }
.grid .br { border-right-color: #000; }
.grid .bb { border-bottom-color: #000; }
.grid .kr { border-right: 2px solid #000; }
.grid .kb { border-bottom: 2px solid #000; }
.grid .green { background: #c6e0b4; }
.grid .blue { background: #b4c6e7; }
.grid .gray { background: #c9c9c9; }
.grid .yes { color: #f00; }
.grid .no { color: #0070c0; }
.grid .mid { text-align: center; }
.grid .end { text-align: right; padding-right: 4px; }
.grid .indent { padding-left: 25px; }
.grid .tight { font-size: 14px; padding: 0; }
.grid .count { background: #ff0; padding-right: 8px; }
.link { display: block; padding: 0 0 4px 12px; color: #0563c1; font-feature-settings: normal; text-underline-offset: 3px; }
/* square block where two thick borders of neighbouring cells meet */
.joint { position: relative; }
.joint::after { content: ""; position: absolute; right: -1px; bottom: -1px; width: 2px; height: 2px; background: #000; }
.kr.joint::after { right: -2px; }
.active { position: relative; }
.active::before { content: ""; position: absolute; z-index: 1; inset: -2px -2px -2px -1px; border: 2px solid #217346; }
.active::after { content: ""; position: absolute; z-index: 2; right: -4px; bottom: -4px; width: 7px; height: 7px; background: #217346; border: 1px solid #fff; }

.vscroll { display: flex; flex-direction: column; width: 15px; margin: 2px 3px 0 3px; }
.vscroll button, .hscroll button { flex: none; width: 15px; height: 15px; background: #fff; border: 1px solid #ababab; }
.vthumb { flex: 815; background: #fff; border: 1px solid #ababab; border-top: 0; }
.vtrack { flex: 22; background: #dadada; }

/* sheet tabs */
.sheetbar { display: flex; flex: none; height: 28px; border-bottom: 1px solid #c0c0c0; }
.navs { display: flex; align-items: center; width: 100px; padding-left: 26px; gap: 23px; }
.stab { font-size: 12px; }
.current { width: 144px; height: 24px; padding: 4px 3px 2px; background: #fff; border: 1px solid #9b9b9b; border-width: 0 1px 0 1px; border-bottom: 2px solid #217346; color: #217346; font-size: 13px; }
.current span { flex: 1; height: 17px; line-height: 17px; background: linear-gradient(#fff, #8fb8e6); }
.yellow { width: 132px; height: 22px; margin: 2px 2px 0 1px; background: #ff0; color: #000; }
.tabsep { width: 1px; height: 20px; margin-top: 3px; background: #999; }
.add { margin: 0 auto 0 32px; }
.sheetbar .dots { margin: 9px 14px 0; }
.hscroll { display: flex; flex: none; width: 37.6%; height: 15px; margin: 6px 19px 0 0; }
.hthumb { flex: 463; background: #fff; border: 1px solid #ababab; border-left: 0; }
.htrack { flex: 69; background: #dadada; }

/* status bar */
.status { display: flex; flex: none; align-items: center; height: 21px; background: #f3f2f1; }
.ready { margin: 0 auto 0 7px; }
.view { width: 38px; height: 21px; }
.view.on { background: #c8c6c4; }
.zoom { width: 14px; height: 20px; }
.slider { appearance: none; width: 100px; height: 12px; background: linear-gradient(#aaa, #aaa) center / 100% 1px no-repeat; }
.slider::-webkit-slider-thumb { appearance: none; width: 5px; height: 12px; background: #666; }
.pct { width: 48px; margin: 0 12px 0 0; text-align: right; padding-right: 6px; }
```
